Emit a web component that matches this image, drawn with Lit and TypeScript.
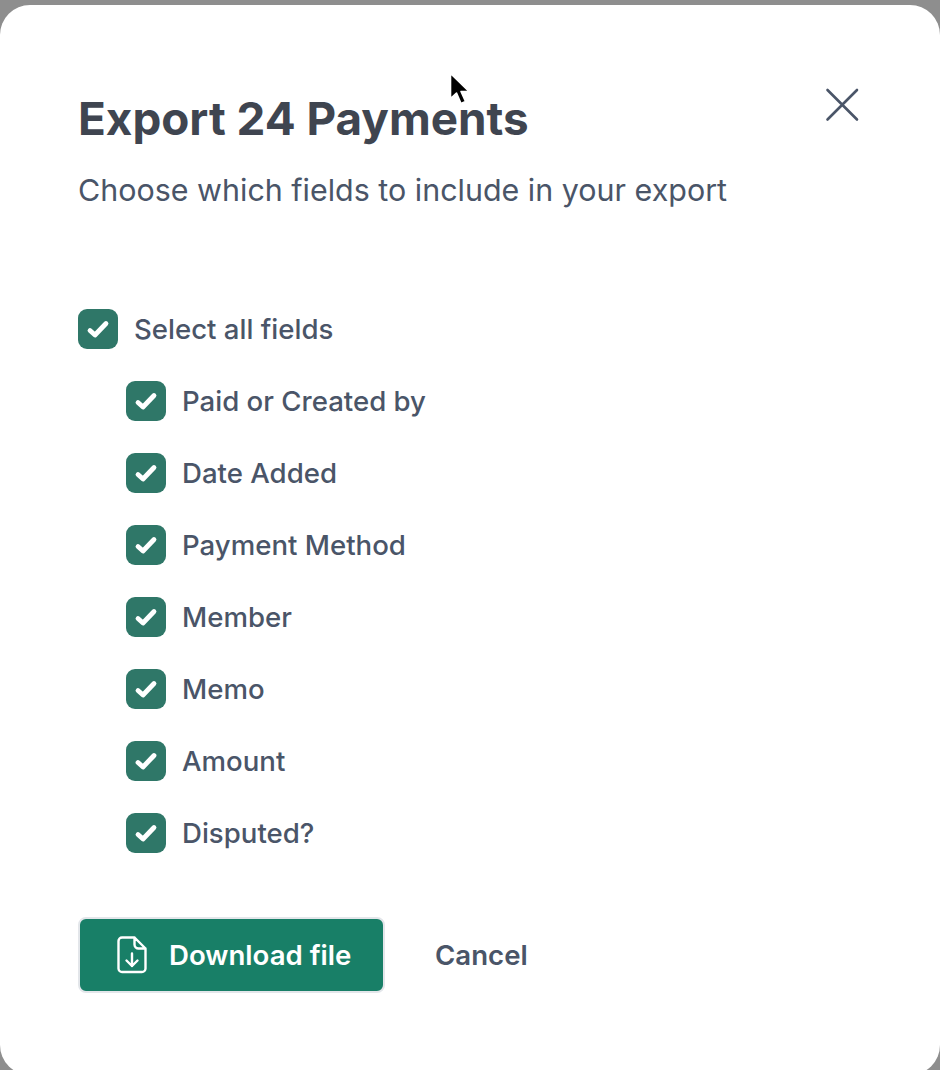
import { LitElement, html, css, svg } from "lit";
import { customElement } from "lit/decorators.js";

const FIELDS = ["Paid or Created by", "Date Added", "Payment Method", "Member", "Memo", "Amount", "Disputed?"];

@customElement("app-root")
export class AppRoot extends LitElement {
  static styles = css`
    :host {
      display: block;
      width: 940px;
      height: 1070px;
      overflow: hidden;
      background: #8e8e8e;
      font-family: Inter, "Liberation Sans", sans-serif;
      color: #4a5568;
    }
    .stage { position: relative; height: 1070px; padding-top: 5px; box-sizing: border-box; }
    .card {
      box-sizing: border-box;
      height: 1070px;
      background: #fff;
      border-radius: 30px;
      padding: 89px 79px 0 78px;
    }
    .head { display: flex; justify-content: space-between; align-items: flex-start; }
    h1 { margin: 0; font-size: 45.8px; line-height: 50px; font-weight: 700; color: #3f4550; }
    .close { width: 34px; height: 34px; margin-top: -6px; margin-right: 2px; display: block; }
    .sub { margin: 26px 0 0 0; font-size: 30.45px; line-height: 40px; color: #4a5568; }
    .fields { margin-top: 99px; display: flex; flex-direction: column; gap: 32px; }
    .row { display: flex; align-items: center; gap: 16px; height: 40px; font-size: 27.6px; font-weight: 500; color: #4a5568; }
    .row.child { margin-left: 48px; }
    .box { width: 40px; height: 40px; border-radius: 9px; background: #2f7768; display: flex; align-items: center; justify-content: center; flex: none; }
    .box svg { width: 28px; height: 28px; display: block; }
    .actions { margin-top: 64px; display: flex; align-items: center; gap: 50px; }
    .btn {
      box-sizing: border-box;
      width: 307px; height: 76px;
      background: #187f67;
      border: 2px solid #e3e6ea;
      border-radius: 8px;
      color: #fff;
      display: flex; align-items: center; gap: 21px;
      padding-left: 36px;
      font-size: 27.6px; font-weight: 600;
    }
    .btn svg { width: 32px; height: 40px; display: block; flex: none; }
    .cancel { font-size: 27.6px; font-weight: 600; color: #4a5568; }
    .cursor { position: absolute; left: 446px; top: 70px; width: 30px; height: 38px; }
  `;

  private box() {
    return html`<span class="box"><svg viewBox="0 0 28 28"><path d="M6 15.5 L11 20 L22 8.5" fill="none" stroke="#fff" stroke-width="4.8" stroke-linecap="round" stroke-linejoin="round"/></svg></span>`;
  }

  render() {
    return html`<div class="stage">
      <div class="card">
        <div class="head">
          <h1>Export 24 Payments</h1>
          <svg class="close" viewBox="0 0 34 34"><path d="M2.5 2 L32 31.5 M32 2 L2.5 31.5" stroke="#4a5568" stroke-width="2.6" stroke-linecap="round"/></svg>
        </div>
        <p class="sub">Choose which fields to include in your export</p>
        <div class="fields">
          <div class="row">${this.box()}<span>Select all fields</span></div>
          ${FIELDS.map((f) => html`<div class="row child">${this.box()}<span>${f}</span></div>`)}
        </div>
        <div class="actions">
          <div class="btn">
            <svg viewBox="0 0 32 40"><path d="M6 2.5 H18.5 L29.5 13.5 V33.5 A3.5 3.5 0 0 1 26 37 H6 A3.5 3.5 0 0 1 2.5 33.5 V6 A3.5 3.5 0 0 1 6 2.5 Z M18.5 2.5 V9.5 A4 4 0 0 0 22.5 13.5 H29.5 M16 18.5 V31 M10.5 25.5 L16 31 L21.5 25.5" fill="none" stroke="#fff" stroke-width="2.4" stroke-linecap="round" stroke-linejoin="round"/></svg>
            <span>Download file</span>
          </div>
          <span class="cancel">Cancel</span>
        </div>
      </div>
      <svg class="cursor" viewBox="0 0 30 38">${svg`<path d="M4.5 3.5 V28.5 L10.5 23 L15 33.5 L19.5 31.5 L15 21.5 H23 Z" fill="#000" stroke="#fff" stroke-width="1.6" stroke-linejoin="round"/>`}</svg>
    </div>`;
  }
}
